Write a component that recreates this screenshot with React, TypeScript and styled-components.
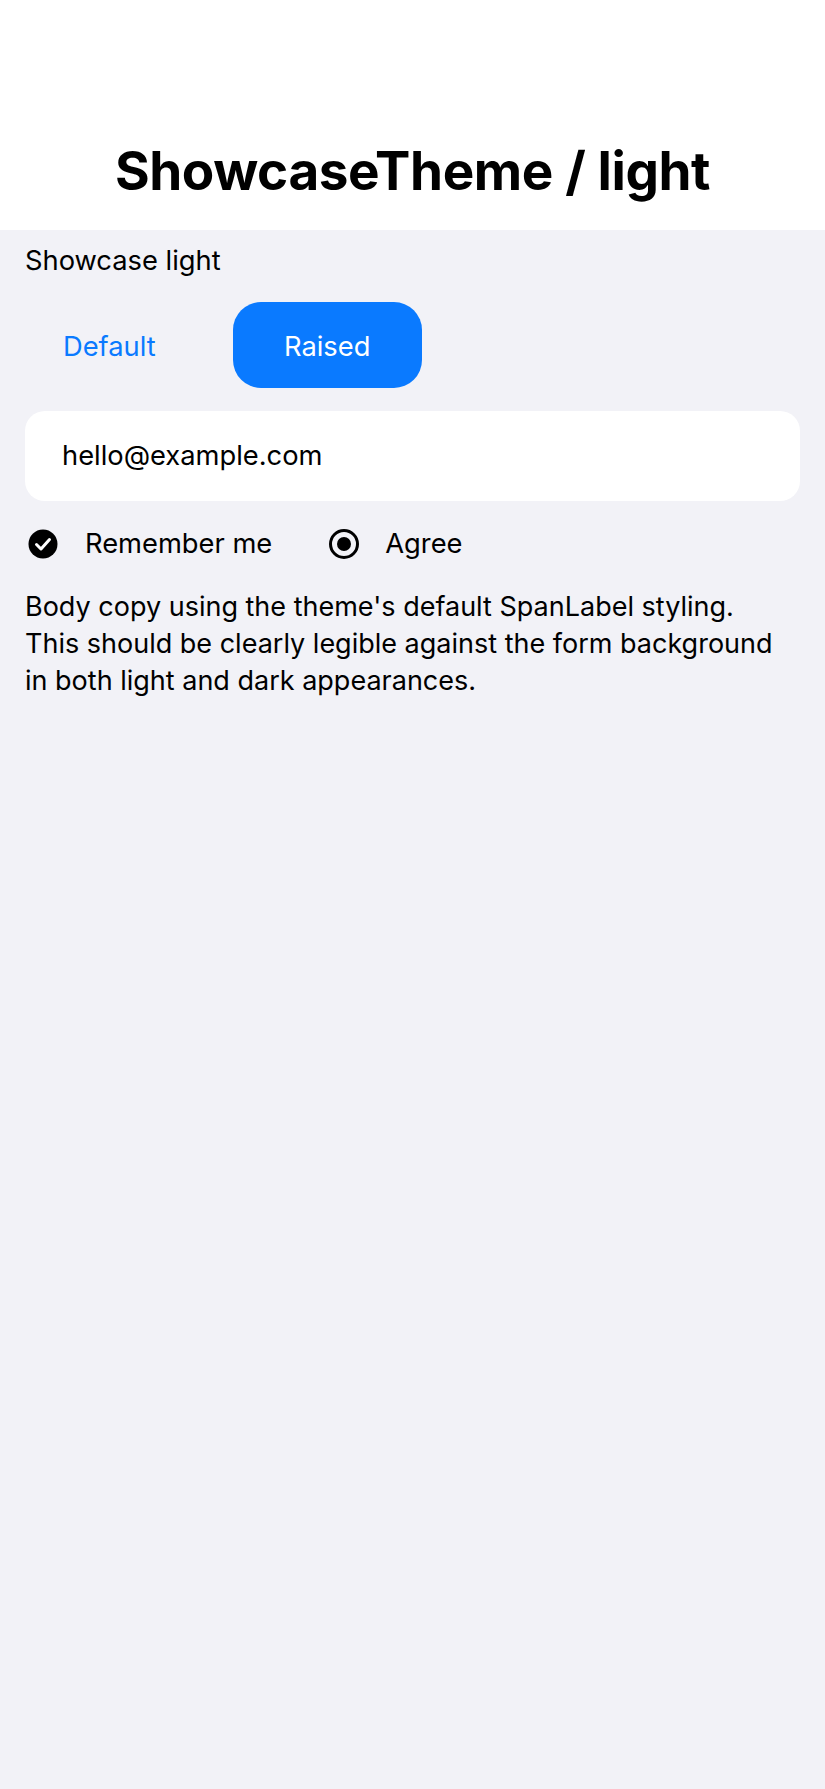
import React from "react";
import styled, { createGlobalStyle } from "styled-components";

const GlobalStyle = createGlobalStyle`
  html, body {
    margin: 0;
    padding: 0;
    background: #f2f2f7;
  }
  body {
    font-family: Inter, "Noto Sans", "Liberation Sans", sans-serif;
    color: #000;
    -webkit-font-smoothing: antialiased;
  }
`;

const Page = styled.div`
  min-height: 1789px;
  background: #f2f2f7;
`;

const Header = styled.header`
  background: #ffffff;
  height: 230px;
  box-sizing: border-box;
  padding-top: 139px;
  display: flex;
  justify-content: center;
`;

const Title = styled.h1`
  margin: 0;
  font-size: 53px;
  line-height: 64px;
  font-weight: 700;
  letter-spacing: -0.4px;
`;

const Content = styled.main`
  padding: 15px 25px 0 25px;
  display: flex;
  flex-direction: column;
`;

const textStyle = `
  font-size: 27.3px;
  line-height: 32px;
  letter-spacing: 0;
`;

const SectionLabel = styled.div`
  ${textStyle}
`;

const ButtonRow = styled.div`
  display: flex;
  align-items: center;
  gap: 39px;
  margin-top: 25px;
`;

const Button = styled.button<{ $raised?: boolean }>`
  font-family: inherit;
  ${textStyle}
  height: 86px;
  border: none;
  border-radius: 28px;
  padding: 3px 38px 0 38px;
  box-sizing: border-box;
  cursor: pointer;
  background: ${(p) => (p.$raised ? "#0a7aff" : "transparent")};
  color: ${(p) => (p.$raised ? "#ffffff" : "#0a7aff")};
  width: ${(p) => (p.$raised ? "189px" : "auto")};
`;

const Field = styled.div`
  margin-top: 23px;
  height: 90px;
  background: #ffffff;
  border-radius: 20px;
  box-sizing: border-box;
  padding: 0 37px;
  display: flex;
  align-items: center;
  ${textStyle}
`;

const ToggleRow = styled.div`
  margin-top: 27px;
  display: flex;
  align-items: center;
  height: 32px;
`;

const Toggle = styled.label<{ $gap: number }>`
  display: flex;
  align-items: center;
  margin-right: 54px;
  ${textStyle}
  gap: ${(p) => p.$gap}px;
`;

const IconBox = styled.span`
  display: inline-flex;
  width: 30px;
  height: 30px;
  margin-left: 3px;
`;

const Body = styled.p`
  margin: 28px 0 0 0;
  max-width: 765px;
  font-size: 27px;
  line-height: 37px;
`;

const CheckIcon = () => (
  <svg width="30" height="30" viewBox="0 0 30 30">
    <circle cx="15" cy="15" r="14.5" fill="#000" />
    <polyline
      points="8.5,15.5 13,20 21.5,10.5"
      fill="none"
      stroke="#fff"
      strokeWidth="3"
      strokeLinecap="round"
      strokeLinejoin="round"
    />
  </svg>
);

const RadioIcon = () => (
  <svg width="30" height="30" viewBox="0 0 30 30">
    <circle cx="15" cy="15" r="13.5" fill="none" stroke="#000" strokeWidth="3" />
    <circle cx="15" cy="15" r="7" fill="#000" />
  </svg>
);

export default function App() {
  return (
    <>
      <GlobalStyle />
      <Page>
        <Header>
          <Title>ShowcaseTheme / light</Title>
        </Header>
        <Content>
          <SectionLabel>Showcase light</SectionLabel>
          <ButtonRow>
            <Button>Default</Button>
            <Button $raised>Raised</Button>
          </ButtonRow>
          <Field>hello@example.com</Field>
          <ToggleRow>
            <Toggle $gap={27}>
              <IconBox>
                <CheckIcon />
              </IconBox>
              Remember me
            </Toggle>
            <Toggle $gap={26}>
              <IconBox>
                <RadioIcon />
              </IconBox>
              Agree
            </Toggle>
          </ToggleRow>
          <Body>
            Body copy using the theme's default SpanLabel styling. This should be
            clearly legible against the form background in both light and dark
            appearances.
          </Body>
        </Content>
      </Page>
    </>
  );
}
